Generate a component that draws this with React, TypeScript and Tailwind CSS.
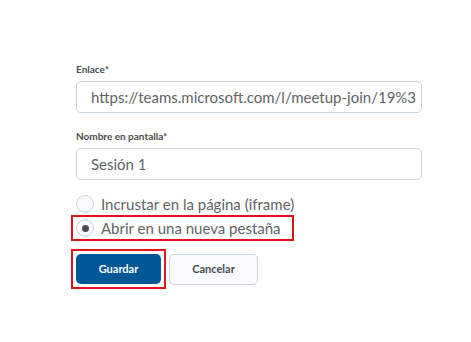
import React from "react";

export default function App() {
  return (
    <div className="w-[471px] h-[342px] bg-white" style={{ fontFamily: "Lato, 'Open Sans', sans-serif" }}>
      <div className="pl-[76px] pt-[63px] w-[422px] flex flex-col">
        <label className="text-[10px] font-bold text-[#494c4e] leading-[12px]">Enlace*</label>
        <div className="mt-[6px] h-[32px] rounded-[5px] border border-[#cdd5dc] flex items-center pl-[14px] overflow-hidden whitespace-nowrap text-[15px] text-[#5f6366]">
          https://teams.microsoft.com/l/meetup-join/19%3
        </div>
        <label className="mt-[17px] text-[10px] font-bold text-[#494c4e] leading-[12px]">Nombre en pantalla*</label>
        <div className="mt-[6px] h-[32px] rounded-[5px] border border-[#cdd5dc] flex items-center pl-[14px] text-[15px] text-[#5f6366]">
          Sesión 1
        </div>
        <div className="mt-[14px] flex items-center gap-[7px] h-[20px]">
          <span className="w-[18px] h-[18px] rounded-full border border-[#cdd5dc] bg-[#f9fbff]" />
          <span className="text-[15px] text-[#5f6366]">Incrustar en la página (iframe)</span>
        </div>
        <div className="-ml-[5px] mt-[1px] w-[223px] h-[26px] border-2 border-[#e3141f] flex items-center gap-[7px] pl-[3px]">
          <span className="w-[18px] h-[18px] rounded-full border border-[#cdd5dc] bg-[#f9fbff] flex items-center justify-center">
            <span className="w-[7px] h-[7px] rounded-full bg-[#494c4e]" />
          </span>
          <span className="text-[15px] text-[#5f6366]">Abrir en una nueva pestaña</span>
        </div>
        <div className="mt-[8px] flex items-center gap-[3px] -ml-[5px]">
          <div className="w-[95px] h-[40px] border-2 border-[#e3141f] p-[3px]">
            <button className="w-full h-full rounded-[5px] bg-[#005795] text-white text-[11px] font-bold">Guardar</button>
          </div>
          <button className="w-[89px] h-[31px] rounded-[5px] bg-[#f9fbff] border border-[#cdd5dc] text-[#494c4e] text-[11px] font-bold">Cancelar</button>
        </div>
      </div>
    </div>
  );
}
